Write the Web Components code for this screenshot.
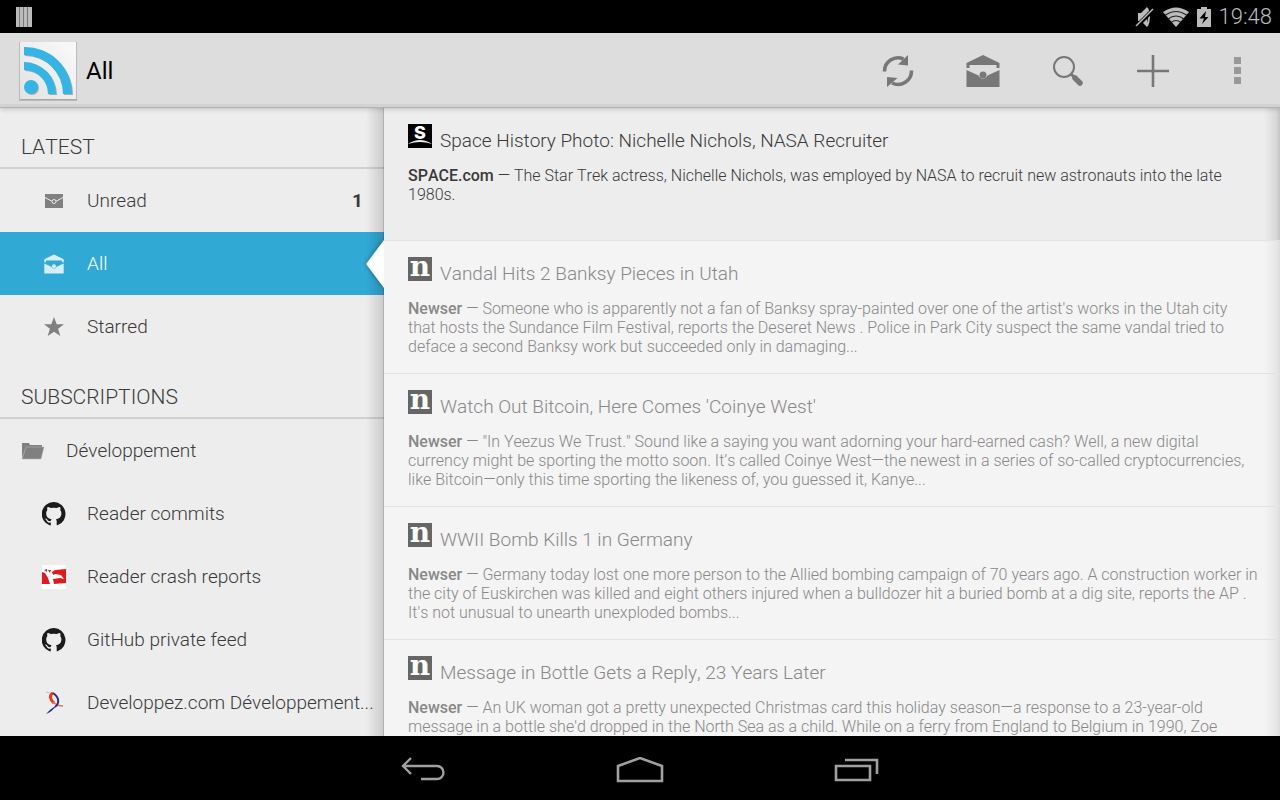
<!DOCTYPE html>
<html lang="en">
<head>
<meta charset="utf-8">
<meta name="viewport" content="width=device-width, initial-scale=1">
<title>Reader - All</title>
<style>
  body {
    margin: 0;
    height: 100vh;
    display: flex;
    flex-direction: column;
    overflow: hidden;
    background: #ededed;
    color: #3a3a3a;
    font-family: Roboto, "Noto Sans", sans-serif;
    font-weight: 300;
    font-kerning: none;
  }
  main {
    flex: 1;
    min-height: 0;
    display: flex;
  }
</style>
</head>
<body>
  <status-bar time="19:48"></status-bar>
  <action-bar heading="All">
    <icon-button icon="refresh" label="Refresh"></icon-button>
    <icon-button icon="open-mail" label="Mark all as read"></icon-button>
    <icon-button icon="search" label="Search"></icon-button>
    <icon-button icon="add" label="Add subscription"></icon-button>
    <icon-button icon="overflow" label="More options"></icon-button>
  </action-bar>
  <main>
    <side-menu>
      <menu-section heading="LATEST">
        <menu-item icon="mail" count="1">Unread</menu-item>
        <menu-item icon="open-mail" selected>All</menu-item>
        <menu-item icon="star">Starred</menu-item>
      </menu-section>
      <menu-section heading="SUBSCRIPTIONS">
        <menu-item icon="folder" folder>Développement</menu-item>
        <menu-item icon="octocat">Reader commits</menu-item>
        <menu-item icon="crash">Reader crash reports</menu-item>
        <menu-item icon="octocat">GitHub private feed</menu-item>
        <menu-item icon="developpez">Developpez.com Développement...</menu-item>
      </menu-section>
    </side-menu>
    <entry-list></entry-list>
  </main>
  <system-nav></system-nav>

<script>
// Every icon: [width, height, markup]
const ICONS = {
  'notification': [16, 20, `
    <path fill="#bbb" d="M0 0h16v20H0z"/>
    <path stroke="#777" d="M3.500 0v20M7.500 0v20M11.500 0v20"/>`],
  'muted': [20, 22, `
    <path fill="#bbb" d="M3 7h3l6-6v20l-6-6H3z"/>
    <path fill="none" stroke="#bbb" stroke-width="2" d="M12 2q4 9 0 18"/>
    <path stroke="#000" stroke-width="4" d="M2 20L18 4"/>
    <path stroke="#bbb" stroke-width="1.500" d="M1 20L18 3"/>`],
  'wifi': [26, 20, `
    <path fill="#bbb" d="M0 5Q13-4 26 5L13 20z"/>
    <path fill="none" stroke="#222" stroke-width="1.200" d="M2 8.500q11-8 22 0M5 12q8-6 16 0M8 15.500q5-4 10 0"/>`],
  'battery': [14, 20, `
    <path fill="#bbb" d="M4 0h6v2h4v18H0V2h4z"/>
    <path fill="#000" d="M9 4L2.500 11.500H7L5 17l6.500-7H8z"/>`],
  'rss': [60, 62, `
    <defs><linearGradient id="tile" x1="1" y1="0" x2="0" y2="1">
      <stop offset="0" stop-color="#fafafa"/><stop offset="1" stop-color="#e2e2e2"/>
    </linearGradient></defs>
    <path fill="#bbb" d="M1 2h58v59H1z"/>
    <path fill="#999" opacity=".6" d="M2 59h57v1H2z"/>
    <path fill="url(#tile)" d="M2 2h56v57H2z"/>
    <g fill="#aaa" transform="translate(1 1)">
      <circle cx="13" cy="47" r="7"/>
      <path d="M6 7a47 47 0 0 1 48 47h-9A39 39 0 0 0 6 15z"/>
      <path d="M6 22a32 32 0 0 1 32 32h-8A24 24 0 0 0 6 30z"/>
    </g>
    <g fill="#33b5e5">
      <circle cx="13" cy="47" r="7"/>
      <path d="M6 7a47 47 0 0 1 48 47h-9A39 39 0 0 0 6 15z"/>
      <path d="M6 22a32 32 0 0 1 32 32h-8A24 24 0 0 0 6 30z"/>
    </g>`],
  'refresh': [32, 32, `
    <path fill="none" stroke="currentColor" stroke-width="3.600" d="M2.500 16.500A13.500 13.500 0 0 1 21.500 4M29.500 15.500A13.500 13.500 0 0 1 10 28"/>
    <path fill="currentColor" d="M26 0v10.500L16 9.500zM5 32V22l10.500 1z"/>`],
  'open-mail': [34, 34, `
    <path fill="currentColor" d="M17 1l16.500 8v5h-3v-3h-27v3h-3V9z"/>
    <path fill="currentColor" d="M.500 16l12 5.500a4.800 4.800 0 0 0 9 0l12-5.500v17H.500z"/>
    <circle fill="currentColor" cx="17" cy="21" r="3.500"/>`],
  'mail': [20, 16, `
    <path fill="currentColor" d="M1 1h18v14H1z"/>
    <path fill="none" stroke="#ededed" d="M1 4.500l6.500 3.500h5L19 4.500"/>
    <circle fill="#808080" stroke="#ededed" cx="10" cy="8.500" r="2"/>`],
  'search': [32, 32, `
    <circle fill="none" stroke="currentColor" stroke-width="2" cx="12" cy="12" r="10"/>
    <path stroke="currentColor" stroke-width="3" d="M18.500 18.500l4 4"/>
    <path stroke="currentColor" stroke-width="5.500" stroke-linecap="round" d="M23 23l5 5"/>`],
  'add': [34, 34, `<path stroke="currentColor" stroke-width="2.600" d="M17 1v32M1 17h32"/>`],
  'overflow': [8, 28, `<path fill="#999" d="M0 0h7v7H0zM0 10h7v7H0zM0 20h7v7H0z"/>`],
  'star': [20, 20, `<path fill="currentColor" d="M10 0l2.700 7.200H20l-5.900 4.500L16.300 19 10 14.700 3.700 19l2.200-7.300L0 7.200h7.300z"/>`],
  'folder': [24, 18, `
    <path fill="currentColor" d="M1 1h7l1 2h12v3H5L1 16z"/>
    <path fill="currentColor" stroke="#b5b5b5" stroke-width=".5" d="M5 5h18l-3 12H1z"/>`],
  'octocat': [24, 24, `
    <path fill="#1b1b1b" d="M12 0a12 12 0 0 0-4 23.400c.6.100.800-.300.800-.600v-2.200c-3.300.700-4-1.500-4-1.500-.500-1.400-1.300-1.800-1.300-1.800-1.100-.7.100-.7.100-.7 1.200.1 1.800 1.200 1.800 1.200 1.100 1.900 2.900 1.300 3.500 1 .1-.800.400-1.300.8-1.600-2.700-.3-5.500-1.300-5.500-5.900 0-1.300.5-2.400 1.200-3.200-.1-.3-.5-1.500.1-3.200 0 0 1-.3 3.300 1.200a11.500 11.500 0 0 1 6 0c2.300-1.500 3.300-1.200 3.300-1.200.7 1.700.2 2.900.1 3.200.8.800 1.200 1.900 1.200 3.200 0 4.600-2.800 5.600-5.500 5.900.4.400.8 1.100.8 2.200v3.300c0 .3.200.7.800.6A12 12 0 0 0 12 0z"/>`],
  'crash': [24, 24, `
    <path fill="#fff" d="M0 0h24v24H0z"/>
    <path fill="#e11b1b" d="M0 7l3 1 3 5 2 6H0zM2 5l3-1v3zM6 5h3L8 8zM13 5l11-1v14l-12 1-1-5 7-1 4 1-3-4-6-1-2 1-1-3z"/>`],
  'developpez': [24, 24, `
    <path fill="none" stroke="#a8c8e8" d="M4 1l8 2"/>
    <path fill="none" stroke="#f03a10" stroke-width="3" d="M11 2C7 4 8 9 12 12"/>
    <path fill="none" stroke="#ee7050" stroke-width="1.400" d="M11 11q4 4 10 4"/>
    <path fill="none" stroke="#22308c" stroke-width="2" d="M11 2c6 4 7 10 2 14"/>
    <path fill="#22308c" d="M14 15q-3 5-10 8 3-4 8-7z"/>`],
  'space': [24, 24, `
    <path d="M0 0h24v24H0z"/>
    <text x="12" y="15" text-anchor="middle" fill="#fff" font-family="Inter, sans-serif" font-weight="800" font-size="18">S</text>
    <path fill="#eee" d="M0 20q12-8 24 0-12-4-24 0z"/>`],
  'newser': [24, 24, `
    <path fill="#666" d="M0 0h24v24H0z"/>
    <text x="12" y="19" text-anchor="middle" fill="#fff" font-family="DejaVu Serif, serif" font-weight="700" font-size="28">n</text>`],
  'back': [44, 26, `
    <path fill="none" stroke="currentColor" stroke-width="2.400" d="M10 1L2 9l8 8M2 9h34a6.500 6.500 0 0 1 0 13H20"/>`],
  'home': [48, 26, `<path fill="none" stroke="currentColor" stroke-width="2.600" d="M2 24V9l22-8 22 8v15z"/>`],
  'recents': [46, 26, `
    <path fill="none" stroke="currentColor" stroke-width="2.600" d="M2 9h34v14H2zM11 3h32v14"/>`],
};

function icon(name, width) {
  const [w, h, markup] = ICONS[name];
  const size = width || w;
  return `<svg width="${size}" height="${Math.round(h * size / w)}" viewBox="0 0 ${w} ${h}" aria-hidden="true">${markup}</svg>`;
}

class StatusBar extends HTMLElement {
  constructor() {
    super();
    this.attachShadow({ mode: 'open' }).innerHTML = `
      <style>
        :host {
          display: flex;
          align-items: center;
          gap: 8px;
          height: 33px;
          padding: 0 8px 0 16px;
          background: #000;
          color: #bbb;
          font-size: 22px;
          line-height: 33px;
        }
        .space { flex: 1; }
        svg { display: block; }
      </style>
      ${icon('notification')}
      <span class="space"></span>
      ${icon('muted')}${icon('wifi')}${icon('battery')}
      <time>${this.getAttribute('time')}</time>`;
  }
}

class ActionBar extends HTMLElement {
  constructor() {
    super();
    this.attachShadow({ mode: 'open' }).innerHTML = `
      <style>
        :host {
          position: relative;
          display: flex;
          align-items: center;
          box-sizing: border-box;
          height: 75px;
          padding: 2px 0 0 18px;
          background: #ddd;
          border-bottom: 1px solid #b2b2b2;
          box-shadow: inset 0 -3px #d2d2d2, 0 1px 5px rgba(0, 0, 0, .2);
          z-index: 1;
        }
        h1 {
          flex: 1;
          margin: 0 0 0 8px;
          color: #000;
          font-size: 24px;
          font-weight: 400;
          line-height: 32px;
        }
        svg { display: block; }
      </style>
      ${icon('rss')}
      <h1>${this.getAttribute('heading')}</h1>
      <slot></slot>`;
  }
}

class IconButton extends HTMLElement {
  constructor() {
    super();
    this.attachShadow({ mode: 'open' }).innerHTML = `
      <style>
        :host { display: block; }
        button {
          display: flex;
          align-items: center;
          justify-content: center;
          width: 85px;
          height: 72px;
          padding: 0;
          border: 0;
          background: none;
          color: #777;
        }
      </style>
      <button type="button" aria-label="${this.getAttribute('label')}">${icon(this.getAttribute('icon'))}</button>`;
  }
}

class SideMenu extends HTMLElement {
  constructor() {
    super();
    this.attachShadow({ mode: 'open' }).innerHTML = `
      <style>
        :host {
          position: relative;
          display: block;
          flex: 0 0 30%;
          min-width: 0;
        }
        nav { height: 100%; overflow: hidden; }
        /* shade thrown by the entry list on the menu */
        .shade {
          position: absolute;
          top: 0;
          right: 0;
          bottom: 0;
          width: 18px;
          background: linear-gradient(to right, rgba(0, 0, 0, 0), rgba(0, 0, 0, .15));
          box-shadow: inset -1px 0 rgba(0, 0, 0, .12);
          pointer-events: none;
        }
      </style>
      <nav><slot></slot></nav>
      <div class="shade"></div>`;
  }
}

class MenuSection extends HTMLElement {
  constructor() {
    super();
    this.attachShadow({ mode: 'open' }).innerHTML = `
      <style>
        :host { display: block; }
        h2 {
          box-sizing: border-box;
          height: 61px;
          margin: 0;
          padding: 24px 21px 0;
          border-bottom: 2px solid #d0d0d0;
          font-size: 21px;
          font-weight: 300;
          line-height: 30px;
        }
      </style>
      <h2>${this.getAttribute('heading')}</h2>
      <slot></slot>`;
  }
}

class MenuItem extends HTMLElement {
  constructor() {
    super();
    const name = this.getAttribute('icon');
    const count = this.getAttribute('count');
    this.attachShadow({ mode: 'open' }).innerHTML = `
      <style>
        :host { display: block; position: relative; }
        :host([selected]) { background: #31a9d5; color: #fff; }
        a {
          display: flex;
          align-items: center;
          gap: 21px;
          box-sizing: border-box;
          height: 63px;
          padding: 1px 4px 0 42px;
          color: inherit;
          font-size: 19px;
          line-height: 24px;
          text-decoration: none;
        }
        :host([folder]) a { padding-left: 21px; }
        .icon { display: flex; justify-content: center; flex: 0 0 24px; color: #808080; }
        :host([selected]) .icon { color: #d6eef7; }
        .label {
          flex: 1;
          overflow: hidden;
          white-space: nowrap;
          text-overflow: ellipsis;
        }
        .count { margin-right: 17px; font-weight: 700; }
        /* notch that points at the list */
        .notch {
          position: absolute;
          z-index: 1;
          top: 8px;
          right: 0;
          width: 18px;
          height: 48px;
          filter: drop-shadow(0 0 2px rgba(0, 0, 0, .4));
        }
      </style>
      <a href="#">
        <span class="icon">${icon(name, name === 'open-mail' ? 20 : 0)}</span>
        <span class="label"><slot></slot></span>
        ${count ? `<span class="count">${count}</span>` : ''}
      </a>
      ${this.hasAttribute('selected') ? '<svg class="notch" viewBox="0 0 18 48"><path fill="#fff" d="M18 0v48L0 24z"/></svg>' : ''}`;
  }
}

class FeedEntry extends HTMLElement {
  constructor() {
    super();
    this.attachShadow({ mode: 'open' });
  }

  set data(data) {
    if (!data) return;
    this.toggleAttribute('read', data.read);
    this.shadowRoot.innerHTML = `
      <style>
        :host {
          display: block;
          box-sizing: border-box;
          height: 133px;
          flex: none;
          padding: 16px 22px 0 24px;
          border-bottom: 1px solid #e3e3e3;
        }
        :host([read]) { background: rgba(255, 255, 255, .4); color: #888; }
        header { display: flex; gap: 8px; }
        svg { display: block; flex: none; overflow: visible; }
        h3 { margin: 0; padding-top: 5px; font-size: 19px; font-weight: 300; line-height: 24px; }
        h3 a { color: inherit; text-decoration: none; }
        p {
          margin: 13px 0 0;
          font-size: 16px;
          line-height: 19px;
        }
        b { font-weight: 500; }
      </style>
      <article>
        <header>${icon(data.icon)}<h3><a href="#">${data.title}</a></h3></header>
        <p><b>${data.source}</b> — ${data.text}</p>
      </article>`;
  }
}

class EntryList extends HTMLElement {
  constructor() {
    super();
    this.attachShadow({ mode: 'open' }).innerHTML = `
      <style>
        :host {
          display: flex;
          flex-direction: column;
          flex: 1;
          min-width: 0;
          overflow: hidden;
          background: linear-gradient(to left, #c4c4c4, #d8d8d8 4px, #ededed 16px);
        }
      </style>`;
    for (const entry of ENTRIES) {
      const row = document.createElement('feed-entry');
      row.data = entry;
      this.shadowRoot.append(row);
    }
  }
}

class SystemNav extends HTMLElement {
  constructor() {
    super();
    this.attachShadow({ mode: 'open' }).innerHTML = `
      <style>
        :host {
          display: flex;
          justify-content: center;
          align-items: center;
          height: 64px;
          background: #000;
        }
        button {
          display: flex;
          align-items: center;
          justify-content: center;
          width: 217px;
          height: 64px;
          padding: 4px 0 0;
          border: 0;
          background: none;
          color: #a0a0a0;
        }
      </style>
      <button type="button" aria-label="Back">${icon('back')}</button>
      <button type="button" aria-label="Home">${icon('home')}</button>
      <button type="button" aria-label="Recent apps">${icon('recents')}</button>`;
  }
}

const ENTRIES = [
  {
    icon: 'space', source: 'SPACE.com', read: false,
    title: 'Space History Photo: Nichelle Nichols, NASA Recruiter',
    text: 'The Star Trek actress, Nichelle Nichols, was employed by NASA to recruit new astronauts into the late 1980s.',
  },
  {
    icon: 'newser', source: 'Newser', read: true,
    title: 'Vandal Hits 2 Banksy Pieces in Utah',
    text: "Someone who is apparently not a fan of Banksy spray-painted over one of the artist's works in the Utah city that hosts the Sundance Film Festival, reports the Deseret News . Police in Park City suspect the same vandal tried to deface a second Banksy work but succeeded only in damaging...",
  },
  {
    icon: 'newser', source: 'Newser', read: true,
    title: "Watch Out Bitcoin, Here Comes 'Coinye West'",
    text: '"In Yeezus We Trust." Sound like a saying you want adorning your hard-earned cash? Well, a new digital currency might be sporting the motto soon. It’s called Coinye West—the newest in a series of so-called cryptocurrencies, like Bitcoin—only this time sporting the likeness of, you guessed it, Kanye...',
  },
  {
    icon: 'newser', source: 'Newser', read: true,
    title: 'WWII Bomb Kills 1 in Germany',
    text: "Germany today lost one more person to the Allied bombing campaign of 70 years ago. A construction worker in the city of Euskirchen was killed and eight others injured when a bulldozer hit a buried bomb at a dig site, reports the AP . It's not unusual to unearth unexploded bombs...",
  },
  {
    icon: 'newser', source: 'Newser', read: true,
    title: 'Message in Bottle Gets a Reply, 23 Years Later',
    text: "An UK woman got a pretty unexpected Christmas card this holiday season—a response to a 23-year-old message in a bottle she'd dropped in the North Sea as a child. While on a ferry from England to Belgium in 1990, Zoe",
  },
];

customElements.define('status-bar', StatusBar);
customElements.define('action-bar', ActionBar);
customElements.define('icon-button', IconButton);
customElements.define('side-menu', SideMenu);
customElements.define('menu-section', MenuSection);
customElements.define('menu-item', MenuItem);
customElements.define('feed-entry', FeedEntry);
customElements.define('entry-list', EntryList);
customElements.define('system-nav', SystemNav);
</script>
</body>
</html>
